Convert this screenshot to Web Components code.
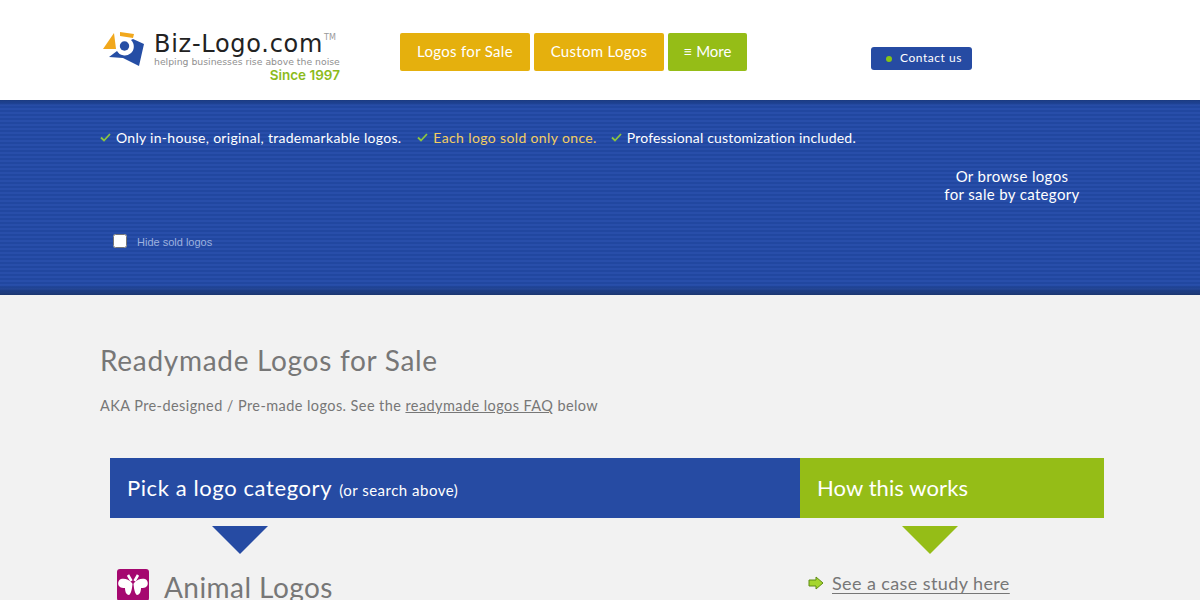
<!DOCTYPE html>
<html>
<head>
<meta charset="utf-8">
<style>
  html, body { margin: 0; height: 600px; overflow: hidden; background: #f2f2f2; font-family: "Lato", "Liberation Sans", sans-serif; }
</style>
</head>
<body>
<site-header></site-header>
<promo-band>
  <check-item>Only in-house, original, trademarkable logos.</check-item>
  <check-item tone="gold" style="letter-spacing: .37px">Each logo sold only once.</check-item>
  <check-item style="letter-spacing: .18px; margin-left: -2px">Professional customization included.</check-item>
</promo-band>
<page-intro></page-intro>
<pick-panels></pick-panels>

<script>
function define(name, html) {
  customElements.define(name, class extends HTMLElement {
    constructor() {
      super();
      this.attachShadow({mode: 'open'}).innerHTML = html;
    }
  });
}

define('site-header', /* html */ `
  <style>
    :host { display: flex; height: 100px; background: #fff; padding-left: 100px; box-sizing: border-box; }
    .logo { width: 300px; display: flex; flex-direction: column; position: relative; padding: 32px 0 0 54px; box-sizing: border-box; color: #222; }
    .logo svg { position: absolute; left: 2px; top: 30px; }
    .name { font: 400 24px/25px "DejaVu Sans", sans-serif; letter-spacing: .72px; white-space: nowrap; }
    .name sup { font-size: 8px; color: #999; vertical-align: 12px; line-height: 0; letter-spacing: 0; margin-left: 1px; }
    .tag { font: 400 9.3px/10px "DejaVu Sans", sans-serif; color: #8f8f8f; white-space: nowrap; }
    .since { font: 600 13.5px/15px "Inter", sans-serif; color: #8cbb1c; text-align: right; width: 186px; white-space: nowrap; margin-top: 1px; }
    nav { display: flex; gap: 4px; margin-top: 33px; height: 38px; }
    .btn { height: 38px; line-height: 37px; border-radius: 2px; color: #fff; font-size: 15px; text-align: center; background: #e5b00d; letter-spacing: .3px; }
    .a { width: 130px; } .b { width: 130px; } .c { width: 79px; background: #95bd17; letter-spacing: 0; }
    .contact { margin: 47px 0 0 124px; width: 101px; height: 23px; background: #264ba3; border-radius: 3px; color: #fff; font-size: 12px; letter-spacing: .55px; display: flex; align-items: center; padding-left: 15px; box-sizing: border-box; gap: 8px; white-space: nowrap; }
    .contact span + span { padding-bottom: 2px; }
    .dot { width: 6px; height: 6px; border-radius: 50%; background: #86c416; flex: none; }
  </style>
  <div class="logo">
    <svg width="44" height="38" viewBox="0 0 44 38">
      <path d="M1 19 L12 3 L14 19 Z" fill="#f1a81d"/>
      <path d="M18 2 L32 4 L31 8 L18 6 Z" fill="#f1a81d"/>
      <path d="M7 27 L15 21 A9 9 0 1 0 29 10 L31 9 L42 14 L37 36 L21 28 Z" fill="#254ea5"/>
      <circle cx="22.5" cy="16" r="4.7" fill="#254ea5"/>
    </svg>
    <div class="name">Biz-Logo.com<sup>TM</sup></div>
    <div class="tag">helping businesses rise above the noise</div>
    <div class="since">Since 1997</div>
  </div>
  <nav>
    <div class="btn a">Logos for Sale</div>
    <div class="btn b">Custom Logos</div>
    <div class="btn c">≡ More</div>
  </nav>
  <div class="contact"><span class="dot"></span><span>Contact us</span></div>
`);

define('promo-band', /* html */ `
  <style>
    :host { display: block; height: 195px; box-sizing: border-box; padding: 29px 0 0 100px; position: relative; color: #fff;
      background:
        linear-gradient(#1a3a80, transparent 6px) top/100% 8px no-repeat,
        linear-gradient(transparent, #1b3670) bottom/100% 10px no-repeat,
        repeating-linear-gradient(#284eaa 0 2px, #2147a0 2px 4px); }
    .checks { display: flex; gap: 16px; }
    .browse { position: absolute; left: 912px; top: 67px; width: 200px; text-align: center; font-size: 15px; line-height: 18px; letter-spacing: .35px; }
    .hide { position: absolute; left: 113px; top: 134px; display: flex; align-items: center; gap: 10px; font: 11px "Liberation Sans", sans-serif; color: #9db1de; }
    .hide input { width: 14px; height: 14px; margin: 0; }
    .hide span { padding-top: 2px; }
  </style>
  <div class="checks"><slot></slot></div>
  <div class="browse">Or browse logos<br>for sale by category</div>
  <label class="hide"><input type="checkbox"><span>Hide sold logos</span></label>
`);

customElements.define('check-item', class extends HTMLElement {
  constructor() {
    super();
    let color = this.getAttribute('tone') === 'gold' ? '#f3cd62' : '#fff';
    this.attachShadow({mode: 'open'}).innerHTML = /* html */ `
      <style>
        :host { display: flex; align-items: center; gap: 5px; font-size: 14px; line-height: 18px; letter-spacing: .29px; color: ${color}; white-space: nowrap; }
        svg { flex: none; margin-top: -2px; }
      </style>
      <svg width="11" height="9" viewBox="0 0 11 9"><path d="M1 4.5 L4 7.5 L10 1" fill="none" stroke="#8cc63f" stroke-width="1.8"/></svg>
      <slot></slot>
    `;
  }
});

define('page-intro', /* html */ `
  <style>
    :host { display: block; padding: 49px 0 0 100px; color: #777; }
    h1 { margin: 0; font-size: 28px; line-height: 32px; font-weight: 400; letter-spacing: .7px; }
    p { margin: 20px 0 0; font-size: 14.5px; line-height: 20px; letter-spacing: .42px; }
    a { color: inherit; }
  </style>
  <h1>Readymade Logos for Sale</h1>
  <p>AKA Pre-designed / Pre-made logos. See the <a href="#">readymade logos FAQ</a> below</p>
`);

define('pick-panels', /* html */ `
  <style>
    :host { display: grid; grid-template-columns: 690px 304px; margin: 42px 0 0 110px; color: #777; }
    .head { height: 60px; color: #fff; padding-left: 17px; display: flex; align-items: baseline; gap: 7px; line-height: 60px; font-size: 22px; letter-spacing: .6px; white-space: nowrap; }
    .head small { font-size: 15px; letter-spacing: .5px; }
    .blue { background: #264ba3; }
    .green { background: #95bd17; letter-spacing: .1px; }
    .tri { width: 0; height: 0; border: 28px solid transparent; border-bottom: 0; margin-top: 8px; }
    .t1 { border-top-color: #264ba3; margin-left: 102px; }
    .t2 { border-top-color: #95bd17; margin-left: 102px; }
    .row { display: flex; align-items: center; }
    .animal { margin: 15px 0 0 7px; gap: 15px; font-size: 28px; line-height: 36px; letter-spacing: .45px; }
    .tile { width: 32px; height: 32px; background: #a5086f; border-radius: 3px; flex: none; margin-top: -4px; }
    .case { margin: 16px 0 0 8px; gap: 8px; font-size: 18px; line-height: 26px; letter-spacing: .4px; }
    a { color: inherit; text-decoration-thickness: 2px; text-underline-offset: 3px; }
    .case a { text-decoration-thickness: 1px; }
  </style>
  <div class="head blue">Pick a logo category <small>(or search above)</small></div>
  <div class="head green">How this works</div>
  <div>
    <div class="tri t1"></div>
    <div class="row animal">
      <svg class="tile" viewBox="0 0 32 32">
        <path d="M15 14 C12 10 7 9 4 10 C1 11 .5 15 2 17 C3.5 19 6 19 8 19 C8 22 9 26 12 26 C14 25 15 20 15.5 15 Z" fill="#fff"/>
        <path d="M17 14 C20 10 25 9 28 10 C31 11 31.5 15 30 17 C28.5 19 26 19 24 19 C24 22 23 26 20 26 C18 25 17 20 16.5 15 Z" fill="#fff"/>
        <path d="M11 6 L14.5 12 M21 6 L17.5 12" stroke="#fff" stroke-width="2.6" fill="none"/>
      </svg>
      <a href="#">Animal Logos</a>
    </div>
  </div>
  <div>
    <div class="tri t2"></div>
    <div class="row case">
      <svg width="16" height="14" viewBox="0 0 16 14"><path d="M1 4 H8 V1 L15 7 L8 13 V10 H1 Z" fill="#a5d62e" stroke="#5f8c14" stroke-width="1"/></svg>
      <a href="#">See a case study here</a>
    </div>
  </div>
`);
</script>
</body>
</html>
